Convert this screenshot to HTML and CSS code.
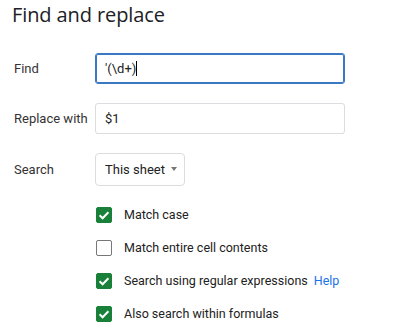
FILE: index.html
```html
<!DOCTYPE html>
<html lang="en">
<head>
    <meta charset="UTF-8">
    <title>Find and replace</title>
    <link rel="stylesheet" href="styles.css">
</head>
<body>
<div class="dialog">
    <h1 class="title">Find and replace</h1>

    <div class="form">
        <label class="label">Find</label>
        <div class="field focused">'(\d+)<span class="caret"></span></div>

        <label class="label">Replace with</label>
        <div class="field">$1</div>

        <label class="label">Search</label>
        <div class="select">This sheet <span class="arrow"></span></div>
    </div>

    <ul class="options">
        <li><span class="box checked"><svg viewBox="0 0 16 16" width="16" height="16"><path d="M3.6 8.2l3 3 5.8-6" fill="none" stroke="#fff" stroke-width="2"/></svg></span>Match case</li>
        <li><span class="box"></span>Match entire cell contents</li>
        <li><span class="box checked"><svg viewBox="0 0 16 16" width="16" height="16"><path d="M3.6 8.2l3 3 5.8-6" fill="none" stroke="#fff" stroke-width="2"/></svg></span>Search using regular expressions <a class="help" href="javascript:void(0);">Help</a></li>
        <li><span class="box checked"><svg viewBox="0 0 16 16" width="16" height="16"><path d="M3.6 8.2l3 3 5.8-6" fill="none" stroke="#fff" stroke-width="2"/></svg></span>Also search within formulas</li>
    </ul>
</div>
</body>
</html>
```

FILE: styles.css
```css
*{
    margin: 0;
    padding: 0;
}

body{
    background: #fff;
    font-family: Roboto, "Liberation Sans", sans-serif;
    color: #222;
}

.dialog{
    padding: 1px 0 0 12px;
}

.title{
    font-family: "Open Sans", Roboto, sans-serif;
    font-size: 20px;
    font-weight: 400;
    color: #202124;
    line-height: 28px;
    letter-spacing: -0.1px;
}

.form{
    display: grid;
    grid-template-columns: 81px 250px;
    row-gap: 19px;
    align-items: center;
    margin-top: 24px;
    padding-left: 2px;
}

.label{
    font-size: 13px;
    color: #333;
}

.field{
    height: 31px;
    box-sizing: border-box;
    border: 1px solid #dadce0;
    border-radius: 3px;
    padding: 0 9px;
    font-size: 13px;
    line-height: 29px;
    color: #222;
}
.field.focused{
    border: 1px solid #3b78c4;
    box-shadow: inset 0 0 0 1px #3b78c4;
}
.caret{
    display: inline-block;
    width: 1px;
    height: 15px;
    background: #000;
    vertical-align: -3px;
}

.select{
    justify-self: start;
    height: 33px;
    box-sizing: border-box;
    border: 1px solid #dadce0;
    border-radius: 4px;
    padding: 0 7px 0 9px;
    font-size: 13px;
    line-height: 31px;
    color: #222;
}
.arrow{
    display: inline-block;
    margin-left: 3px;
    border-left: 3px solid transparent;
    border-right: 3px solid transparent;
    border-top: 4px solid #777;
    vertical-align: 3px;
}

.options{
    list-style: none;
    margin: 12px 0 0 84px;
}
.options li{
    display: flex;
    align-items: center;
    height: 33px;
    font-size: 12.5px;
    color: #222;
}
.box{
    width: 16px;
    height: 16px;
    box-sizing: border-box;
    border: 1px solid #777;
    border-radius: 2px;
    margin-right: 12px;
    flex: none;
}
.box.checked{
    background: #188038;
    border-color: #188038;
}
.box svg{
    display: block;
    margin: -1px;
}
.help{
    color: #1a73e8;
    text-decoration: none;
    margin-left: 6px;
}
```
